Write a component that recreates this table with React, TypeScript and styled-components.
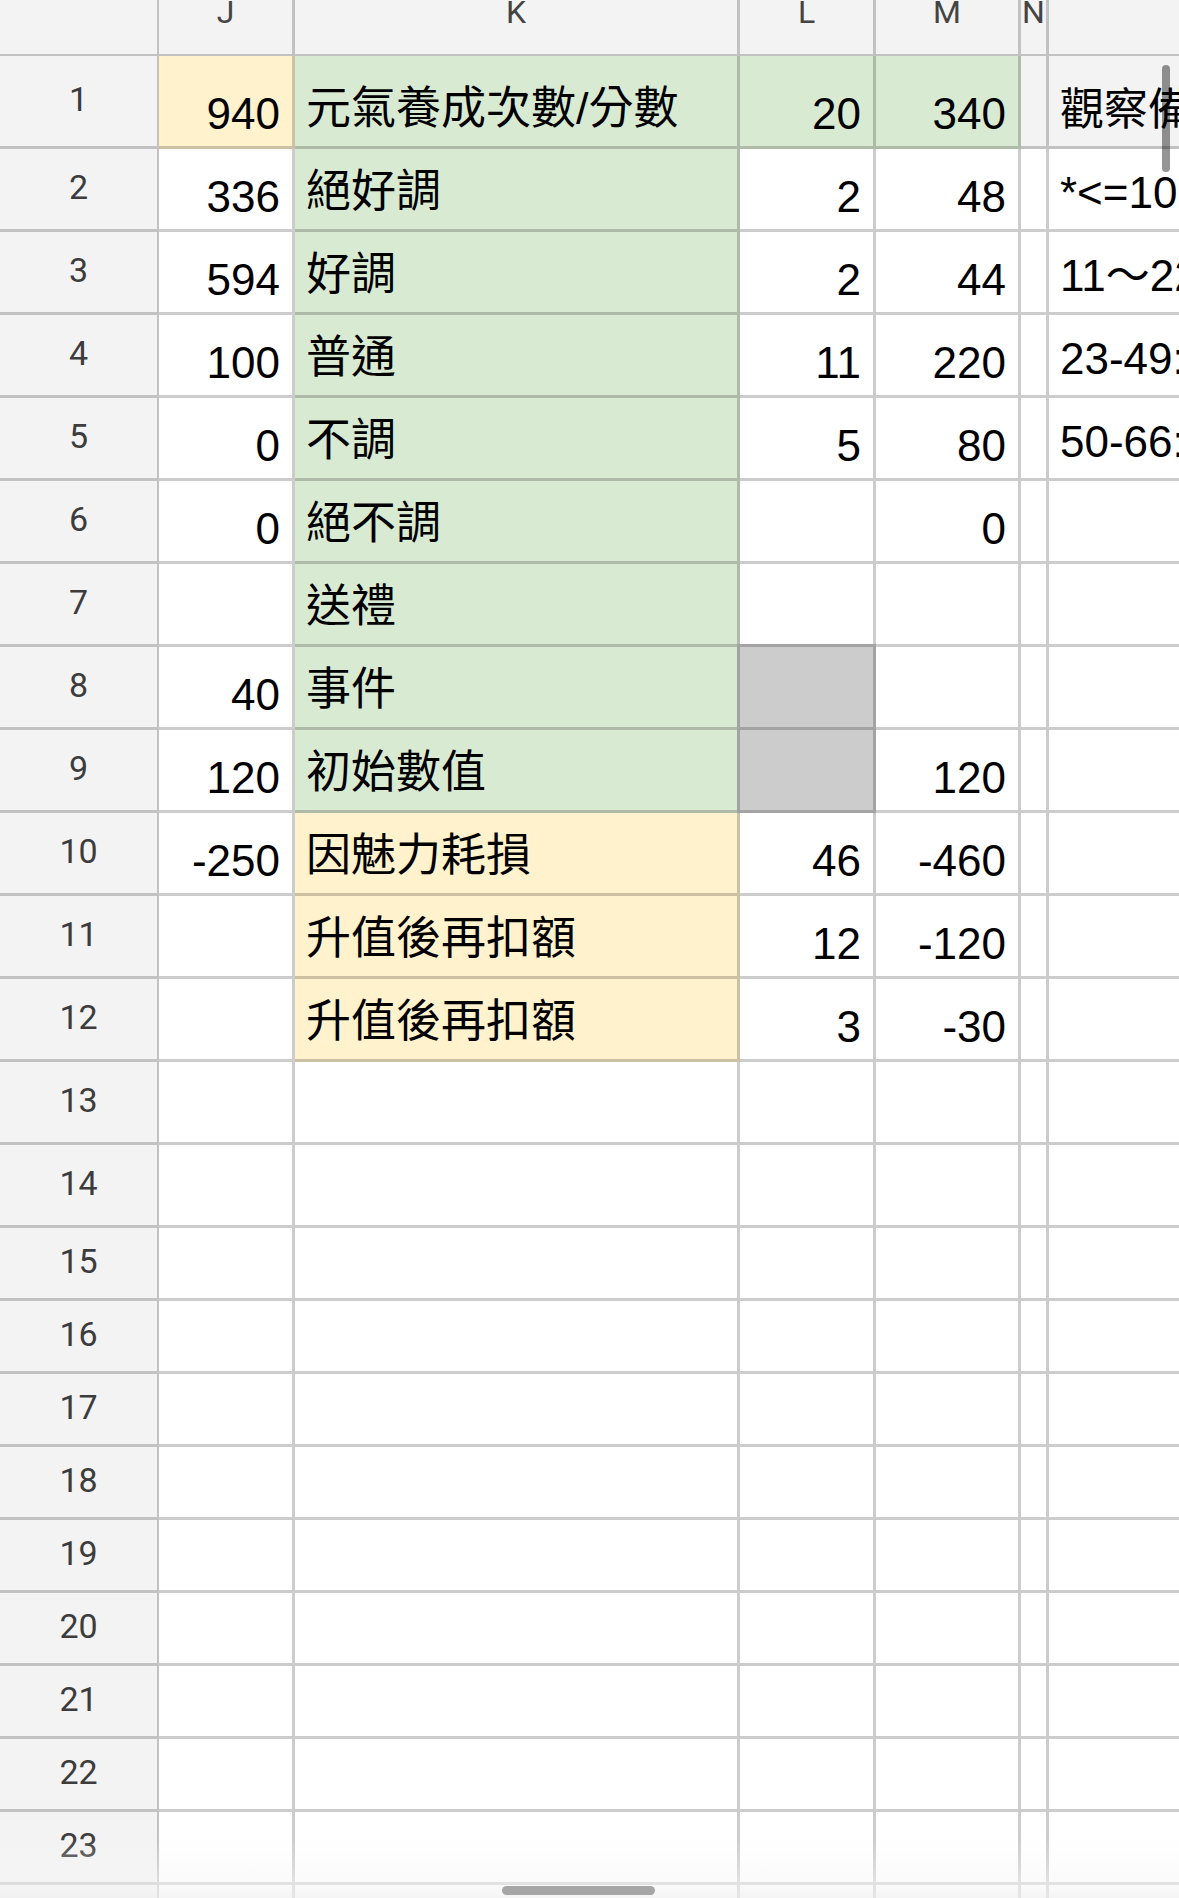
import styled, { createGlobalStyle, css } from "styled-components";

type Fill = "yellow" | "green" | "gray" | "frozen" | "none";
type Kind = "num" | "label" | "note";

const fills: Record<Fill, string> = {
  yellow: "#fff2cc",
  green: "#d9ead3",
  gray: "#cccccc",
  frozen: "#f3f3f3",
  none: "transparent",
};

const GlobalStyle = createGlobalStyle`
  html, body {
    margin: 0;
    padding: 0;
    background: #ffffff;
  }
  body {
    overflow: hidden;
  }
`;

const Screen = styled.div`
  position: relative;
  width: 1179px;
  height: 1898px;
  overflow: hidden;
  background: #ffffff;
`;

const Sheet = styled.div`
  display: grid;
  grid-template-columns: 159px 136px 445px 136px 145px 28px 420px;
  grid-template-rows: 56px 93px repeat(13, 83px) repeat(9, 73px) 60px;
  width: max-content;
`;

const ColHead = styled.div<{ $corner?: boolean }>`
  box-sizing: border-box;
  display: flex;
  justify-content: center;
  align-items: flex-start;
  overflow: hidden;
  background: #f3f3f3;
  border-right: ${(p) => (p.$corner ? 2 : 3)}px solid rgba(0, 0, 0, 0.2);
  border-bottom: 2px solid rgba(0, 0, 0, 0.2);
  font-family: Roboto, "Liberation Sans", sans-serif;
  font-size: 32px;
  line-height: 32px;
  color: #444444;
`;

const Letter = styled.span`
  margin-top: -4px;
`;

const RowHead = styled.div`
  box-sizing: border-box;
  display: flex;
  justify-content: center;
  align-items: center;
  padding-bottom: 4px;
  background: #f3f3f3;
  border-right: 2px solid rgba(0, 0, 0, 0.2);
  border-bottom: 3px solid rgba(0, 0, 0, 0.2);
  font-family: Roboto, "Liberation Sans", sans-serif;
  font-size: 34px;
  line-height: 34px;
  color: #3c3c3c;
`;

const Cell = styled.div<{ $fill: Fill; $kind: Kind }>`
  box-sizing: border-box;
  display: flex;
  align-items: flex-end;
  justify-content: ${(p) => (p.$kind === "num" ? "flex-end" : "flex-start")};
  padding: 0 12px ${(p) => (p.$kind === "num" ? 10 : p.$kind === "label" ? 15 : 14)}px 11px;
  background: ${(p) => fills[p.$fill]};
  border-right: 3px solid rgba(0, 0, 0, 0.2);
  border-bottom: 3px solid rgba(0, 0, 0, 0.2);
  font-family: "Liberation Sans", Arial, "Noto Sans CJK TC", sans-serif;
  font-size: ${(p) => (p.$kind === "label" ? 45 : 44)}px;
  line-height: 44px;
  color: #000000;
  white-space: nowrap;
  overflow: hidden;

  ${(p) =>
    p.$fill === "gray" &&
    css`
      box-shadow: -3px 0 0 #a3a3a3, 0 -3px 0 #a3a3a3, -3px -3px 0 #a3a3a3;
    `}
`;

const VScroll = styled.div`
  position: absolute;
  left: 1162px;
  top: 65px;
  width: 8px;
  height: 107px;
  border-radius: 4px;
  background: rgba(0, 0, 0, 0.42);
`;

const HScroll = styled.div`
  position: absolute;
  left: 502px;
  top: 1886px;
  width: 153px;
  height: 9px;
  border-radius: 5px;
  background: #a6a6a6;
`;

const Fade = styled.div`
  position: absolute;
  left: 0;
  right: 0;
  bottom: 0;
  height: 60px;
  pointer-events: none;
  background: linear-gradient(
    to bottom,
    rgba(255, 255, 255, 0) 0%,
    rgba(246, 246, 246, 0.55) 80%,
    rgba(240, 240, 240, 0.7) 100%
  );
`;

type RowData = {
  j?: string;
  k?: string;
  l?: string;
  m?: string;
  o?: string;
  fill?: Partial<Record<"j" | "k" | "l" | "m" | "n" | "o", Fill>>;
};

const rows: RowData[] = [
  {
    j: "940",
    k: "元氣養成次數/分數",
    l: "20",
    m: "340",
    o: "觀察備註",
    fill: { j: "yellow", k: "green", l: "green", m: "green", n: "frozen", o: "frozen" },
  },
  { j: "336", k: "絕好調", l: "2", m: "48", o: "*<=10", fill: { k: "green" } },
  { j: "594", k: "好調", l: "2", m: "44", o: "11～22", fill: { k: "green" } },
  { j: "100", k: "普通", l: "11", m: "220", o: "23-49:", fill: { k: "green" } },
  { j: "0", k: "不調", l: "5", m: "80", o: "50-66:", fill: { k: "green" } },
  { j: "0", k: "絕不調", m: "0", fill: { k: "green" } },
  { k: "送禮", fill: { k: "green" } },
  { j: "40", k: "事件", fill: { k: "green", l: "gray" } },
  { j: "120", k: "初始數值", m: "120", fill: { k: "green", l: "gray" } },
  { j: "-250", k: "因魅力耗損", l: "46", m: "-460", fill: { k: "yellow" } },
  { k: "升值後再扣額", l: "12", m: "-120", fill: { k: "yellow" } },
  { k: "升值後再扣額", l: "3", m: "-30", fill: { k: "yellow" } },
];

const TOTAL_ROWS = 24;
const columns = ["J", "K", "L", "M", "N", ""];

function SheetRow({ index, data }: { index: number; data: RowData }) {
  const f = data.fill ?? {};
  return (
    <>
      <RowHead>{index <= 23 ? index : ""}</RowHead>
      <Cell $kind="num" $fill={f.j ?? "none"}>{data.j}</Cell>
      <Cell $kind="label" $fill={f.k ?? "none"}>{data.k}</Cell>
      <Cell $kind="num" $fill={f.l ?? "none"}>{data.l}</Cell>
      <Cell $kind="num" $fill={f.m ?? "none"}>{data.m}</Cell>
      <Cell $kind="num" $fill={f.n ?? "none"} />
      <Cell $kind="note" $fill={f.o ?? "none"}>{data.o}</Cell>
    </>
  );
}

export default function App() {
  const all = Array.from({ length: TOTAL_ROWS }, (_, i) => rows[i] ?? {});
  return (
    <Screen>
      <GlobalStyle />
      <Sheet>
        <ColHead $corner />
        {columns.map((c, i) => (
          <ColHead key={i}>
            <Letter>{c}</Letter>
          </ColHead>
        ))}
        {all.map((r, i) => (
          <SheetRow key={i} index={i + 1} data={r} />
        ))}
      </Sheet>
      <VScroll />
      <Fade />
      <HScroll />
    </Screen>
  );
}
